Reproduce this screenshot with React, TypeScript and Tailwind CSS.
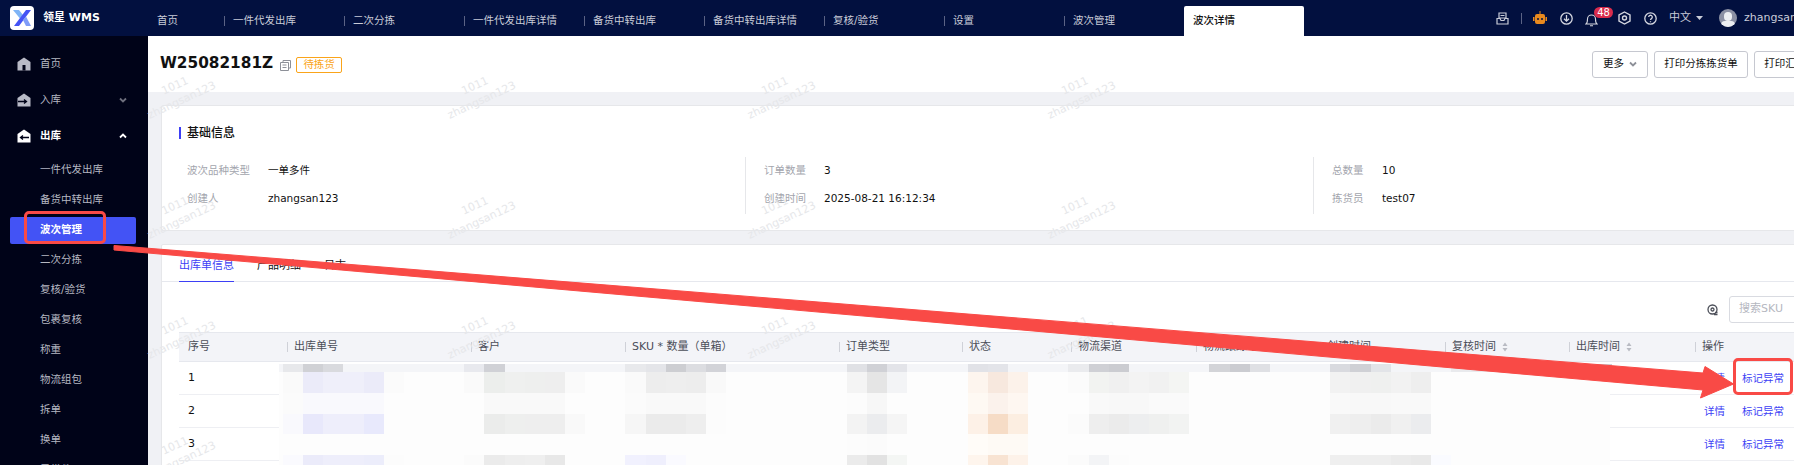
const FONT = "font-['DejaVu_Sans','Noto_Sans_CJK_SC',sans-serif]";

const TABS = ["一件代发出库", "二次分拣", "一件代发出库详情", "备货中转出库", "备货中转出库详情", "复核/验货", "设置", "波次管理"];
const SUB_MENU = ["一件代发出库", "备货中转出库", "波次管理", "二次分拣", "复核/验货", "包裹复核", "称重", "物流组包", "拆单", "换单", "异常件"];

const COLUMNS = [
  { title: "序号" },
  { title: "出库单号" },
  { title: "客户" },
  { title: "SKU * 数量（单箱）" },
  { title: "订单类型" },
  { title: "状态" },
  { title: "物流渠道" },
  { title: "物流跟踪号" },
  { title: "创建时间" },
  { title: "复核时间", sort: true },
  { title: "出库时间", sort: true },
  { title: "操作" },
];

const GRID = "grid grid-cols-[108px_184px_154px_214px_123px_109px_125px_124px_125px_124px_126px_130px]";

// mosaic that hides the customer data: [row, first column, ...colours]
const MOSAIC_ROWS = [
  { y: 364, h: 8 },
  { y: 372, h: 21 },
  { y: 393, h: 21 },
  { y: 414, h: 20 },
  { y: 434, h: 21 },
  { y: 455, h: 10 },
];
const MOSAIC: [number, number, ...string[]][] = [
  [0, 0, "#e7e8eb", "#d0d1d5", "#d9dade"],
  [0, 9, "#e8e9ee", "#d0d1d6"],
  [0, 17, "#e8e9ec", "#e4e5e9", "#cdced2", "#dcdde1", "#d2d3d8"],
  [0, 28, "#e0e1e5", "#d0d1d6", "#e3e4e9"],
  [0, 34, "#e1e2e7", "#e3e4e9"],
  [0, 39, "#eaebee", "#cfd0d5", "#cbccd1"],
  [0, 46, "#d3d4d8", "#cbccd1", "#dfe0e4"],
  [0, 52, "#d9dadf", "#cfd0d5", "#e2e4e8"],
  [0, 58, "#e9eaed", "#e9eaed"],
  [0, 65, "#cfd0d5"],
  [1, 0, "#fafafa", "#ebebf9", "#efeffa", "#efeffa", "#ebebf9", "#fbfbfb"],
  [1, 9, "#fafafa", "#eceeec", "#eff0ef", "#eeefee", "#eeeeee", "#fafafa"],
  [1, 17, "#fafafa", "#ededed", "#eeeeee", "#ededed", "#f9f9f9"],
  [1, 28, "#f4f4f4", "#e5e5e5", "#f3f4f6"],
  [1, 34, "#fdf5ee", "#f7e8de", "#fcf2ea"],
  [1, 39, "#fbfbfb", "#f2f3f1", "#f0f0f0", "#f3f3f3", "#f1f1f1", "#f4f5f3"],
  [1, 52, "#f2f2f2", "#f0f0f0", "#eff0ef", "#f2f2f2", "#eeeeee"],
  [2, 0, "#fbfbfb", "#f9f9fd", "#f9f9fd", "#f9f9fd", "#f9f9fd"],
  [2, 10, "#f9f9f9", "#f9f9f9", "#f9f9f9", "#f9f9f9"],
  [2, 17, "#fbfbfb", "#f9f9f9", "#f9f9f9", "#f9f9f9", "#fcfcfc"],
  [2, 28, "#fcfcfc", "#f7f7f7"],
  [2, 34, "#fef9f3", "#fbf2ec", "#fef7f1"],
  [2, 40, "#f9f9f9", "#f8f8f8", "#f8f8f8", "#fafafa", "#fafafa"],
  [2, 52, "#f9f9f9", "#f8f8f8", "#f8f8f8", "#f9f9f9", "#f9f9f9"],
  [3, 0, "#f9f9fd", "#e8e8fb", "#eeeefb", "#eeeefb", "#e8e9fc"],
  [3, 10, "#ebeceb", "#eeefee", "#eeeeee", "#eeeeee", "#f9f9f9"],
  [3, 17, "#f6f6f6", "#ebebeb", "#ebebeb", "#eeeeee", "#fcfcfc"],
  [3, 28, "#f3f3f3", "#ebecee", "#f5f5f5"],
  [3, 34, "#fdf1e7", "#f6dcc6", "#fceee1"],
  [3, 39, "#fbfbfb", "#eeeeee", "#ebebeb", "#edeeef", "#eff0ef", "#f2f3f2"],
  [3, 52, "#f0f0f0", "#eeeeee", "#ebebeb", "#f0f0f0", "#ebecee"],
  [4, 28, "#fcfcfc", "#fbfbfb", "#fdfdfd"],
  [4, 34, "#fffcf8", "#fefaf5", "#fefaf5"],
  [5, 0, "#fafafe", "#ebebfa", "#eeeefb", "#eeeefb", "#ecedfb", "#fcfcfc"],
  [5, 9, "#fbfbfb", "#ebebeb", "#eeeeee", "#efefef", "#e8e8e8"],
  [5, 17, "#f1f1fe", "#efeffd", "#fafaff"],
  [5, 28, "#ebebeb", "#e2e2e2", "#f4f6f4"],
  [5, 34, "#fef5ed", "#f8e3d2", "#fdf2e9"],
  [5, 39, "#fbfbfb", "#f3f4f6", "#fcfcfc"],
  [5, 52, "#efefef", "#eeeeee", "#eeeeee", "#ebebeb", "#e9e9e9", "#fafbff"],
];

function Logo() {
  return (
    <svg width="24" height="24" viewBox="0 0 24 24" className="shrink-0">
      <rect width="24" height="24" rx="4" fill="#fff" />
      <path d="M3 4h6l4 5-3 3.500z" fill="#7fb4f6" />
      <path d="M21 4h-5L4 20h5z" fill="#4353f5" />
      <path d="M13 14l3-3.500 5 9.500h-5z" fill="#7f9cf8" />
    </svg>
  );
}

function HouseIcon({ kind, color }: { kind: "home" | "in" | "out"; color: string }) {
  return (
    <svg width="14" height="14" viewBox="0 0 14 14" className="shrink-0">
      <path d="M7 .5 13.500 5v8.500H.5V5z" fill={color} />
      {kind === "home" && <rect x="5.500" y="8" width="3" height="5.500" fill="#000318" />}
      {kind === "in" && <path d="M1 8.500h8M7 6.500l2.500 2-2.500 2" stroke="#000318" strokeWidth="1.300" fill="none" />}
      {kind === "out" && <path d="M12 8.500H4M6 6.500l-2.500 2 2.500 2" stroke="#000318" strokeWidth="1.300" fill="none" />}
    </svg>
  );
}

function Chevron({ up, color }: { up?: boolean; color: string }) {
  return (
    <svg width="8" height="6" viewBox="0 0 8 6" className="shrink-0">
      <path d={up ? "M1 4.500 4 1.500l3 3" : "M1 1.500 4 4.500l3-3"} stroke={color} strokeWidth="1.800" fill="none" />
    </svg>
  );
}

function TopIcons() {
  return (
    <div className={`absolute left-[1496px] top-0 h-[36px] w-[298px] flex items-center text-[11px] text-[#c9ccd8] ${FONT}`}>
      <svg width="13" height="13" viewBox="0 0 13 13" fill="none" stroke="#c9ccd8" strokeWidth="1.200" className="shrink-0">
        <path d="M3 1h7v5H3zM1 6.500l3 0 1 2h3l1-2h3v5.500H1zM4.500 3.500h4" />
      </svg>
      <div className="w-px h-[11px] bg-[#5b6385] ml-[12px] shrink-0" />
      <svg width="14" height="15" viewBox="0 0 14 15" className="ml-[11px] shrink-0">
        <rect x="6.500" y="0" width="1" height="3" fill="#e98a1e" />
        <rect x="2" y="3" width="10" height="10" rx="2" fill="#e98a1e" />
        <rect x="0" y="6" width="1.500" height="4" fill="#e98a1e" />
        <rect x="12.500" y="6" width="1.500" height="4" fill="#e98a1e" />
        <circle cx="5" cy="8" r="1" fill="#02103f" />
        <circle cx="9" cy="8" r="1" fill="#02103f" />
      </svg>
      <svg width="13" height="13" viewBox="0 0 13 13" fill="none" stroke="#d5d7e0" strokeWidth="1.300" className="ml-[13px] shrink-0">
        <circle cx="6.500" cy="6.500" r="5.700" />
        <path d="M6.500 3v6M4 6.800l2.500 2.400L9 6.800" />
      </svg>
      <div className="relative ml-[12px] w-[13px] h-[14px] mt-[4px] shrink-0">
        <svg width="13" height="14" viewBox="0 0 13 14" fill="none" stroke="#d5d7e0" strokeWidth="1.100">
          <path d="M1 11c1.500-1 1.500-3 1.500-5a4 4 0 0 1 8 0c0 2 0 4 1.500 5zM5 12.800h3" />
        </svg>
        <span className="absolute left-[9px] top-[-6px] h-[11px] w-[19px] rounded-full bg-[#d92c4c] text-white text-[10px] leading-[11px] text-center">48</span>
      </div>
      <svg width="13" height="14" viewBox="0 0 13 14" fill="none" stroke="#d5d7e0" strokeWidth="1.400" className="ml-[20px] shrink-0">
        <path d="M6.500 1 12 4v6l-5.500 3L1 10V4z" />
        <circle cx="6.500" cy="7" r="2" />
      </svg>
      <svg width="13" height="13" viewBox="0 0 13 13" fill="none" stroke="#d5d7e0" strokeWidth="1.300" className="ml-[13px] shrink-0">
        <circle cx="6.500" cy="6.500" r="5.700" />
        <path d="M4.700 5a1.800 1.800 0 1 1 2.700 1.600c-.6.4-.9.700-.9 1.400M6.500 9.200v1" />
      </svg>
      <span className="ml-[12px] w-[22px] shrink-0">中文</span>
      <svg width="7" height="4" viewBox="0 0 7 4" className="ml-[5px] shrink-0">
        <path d="M0 0h7L3.500 4z" fill="#c9ccd8" />
      </svg>
      <div className="relative ml-[16px] size-[18px] rounded-full bg-[#8b90a4] overflow-hidden shrink-0">
        <div className="absolute left-[5px] top-[3px] w-[8px] h-[9px] rounded-full bg-[#eceef2]" />
        <div className="absolute left-[2px] top-[12px] w-[14px] h-[8px] rounded-full bg-[#eceef2]" />
      </div>
      <span className="ml-[7px] whitespace-nowrap">zhangsan123</span>
    </div>
  );
}

function TopBar() {
  return (
    <header className={`relative h-[36px] bg-[#02103f] flex items-center ${FONT}`}>
      <div className="w-[104px] pl-[10px] flex items-center gap-[9px] shrink-0">
        <Logo />
        <span className="text-[11px] font-bold text-white whitespace-nowrap">领星 WMS</span>
      </div>
      <div className="self-end h-[30px] flex text-[10.5px] text-[#c9ccd8]">
        <div className="w-[120px] pl-[53px] flex items-center">首页</div>
        {TABS.map((t) => (
          <div key={t} className="w-[120px] flex items-center">
            <div className="w-px h-[10px] bg-[#5b6385]" />
            <span className="pl-[8px] whitespace-nowrap">{t}</span>
          </div>
        ))}
        <div className="w-[120px] pl-[9px] flex items-center bg-white rounded-t-[2px] text-[#111] font-medium">波次详情</div>
      </div>
      <TopIcons />
    </header>
  );
}

function Sidebar() {
  return (
    <aside className={`w-[148px] shrink-0 bg-[#000318] text-[10.5px] text-[#b6b8c2] ${FONT}`}>
      <div className="h-[36px] mt-[10px] pl-[17px] pr-[21px] flex items-center gap-[9px]">
        <HouseIcon kind="home" color="#b8bac6" />
        <span>首页</span>
      </div>
      <div className="h-[36px] pl-[17px] pr-[21px] flex items-center gap-[9px]">
        <HouseIcon kind="in" color="#b8bac6" />
        <span className="flex-1">入库</span>
        <Chevron color="#6d6f7d" />
      </div>
      <div className="h-[36px] pl-[17px] pr-[21px] flex items-center gap-[9px] text-white font-bold">
        <HouseIcon kind="out" color="#ffffff" />
        <span className="flex-1">出库</span>
        <Chevron up color="#ffffff" />
      </div>
      <div className="mt-[1px] flex flex-col">
        {SUB_MENU.map((m) =>
          m === "波次管理" ? (
            <div key={m} className="h-[30px] flex items-center">
              <div className="ml-[10px] w-[126px] h-[27px] pl-[30px] flex items-center bg-[#4353f5] rounded-[2px] text-white font-bold">{m}</div>
            </div>
          ) : (
            <div key={m} className="h-[30px] pl-[40px] flex items-center">{m}</div>
          )
        )}
      </div>
    </aside>
  );
}

function Info({ label, value }: { label: string; value: string }) {
  return (
    <div className="flex items-center h-[28px]">
      <span className="text-[#a3a5ad] whitespace-nowrap">{label}</span>
      <span className="text-[#111] whitespace-nowrap">{value}</span>
    </div>
  );
}

function InfoColumn({ rows, className }: { rows: [string, string][]; className: string }) {
  return (
    <div className={`shrink-0 h-[57px] flex flex-col ${className}`}>
      {rows.map(([l, v]) => (
        <Info key={l} label={l} value={v} />
      ))}
    </div>
  );
}

function SortIcon() {
  return (
    <svg width="6" height="10" viewBox="0 0 6 10" className="ml-[6px] shrink-0">
      <path d="M3 0.500 5.500 4H.5zM3 9.500.5 6h5z" fill="#b9bbc3" />
    </svg>
  );
}

function OrderTable() {
  return (
    <div className="mt-[9px] ml-[17px] w-[1650px] text-[11px]">
      <div className={`${GRID} h-[30px] bg-[#f3f4f8] border-y border-[#e6e8ee] text-[#4b4e58]`}>
        {COLUMNS.map((c, i) => (
          <div key={c.title} className="flex items-center whitespace-nowrap overflow-hidden">
            {i > 0 && <div className="w-px h-[10px] bg-[#cfd1d8] mr-[6px] shrink-0" />}
            <span className={i === 0 ? "pl-[9px]" : ""}>{c.title}</span>
            {c.sort && <SortIcon />}
          </div>
        ))}
      </div>
      {["1", "2", "3", "4"].map((n) => (
        <div key={n} className={`${GRID} h-[33px] pt-[1px] border-b border-[#eeeff3] items-center text-[#111]`}>
          <span className="pl-[9px]">{n}</span>
          {COLUMNS.slice(1, -1).map((c) => (
            <span key={c.title} />
          ))}
          <div className="pl-[9px] flex gap-[17px] text-[#3d3ff5] text-[10.5px] whitespace-nowrap">
            <span>详情</span>
            <span>标记异常</span>
          </div>
        </div>
      ))}
    </div>
  );
}

function Watermarks() {
  const tiles = Array.from({ length: 16 }, (_, i) => i);
  return (
    <div className={`absolute left-[156px] top-[59px] grid grid-cols-[repeat(4,300px)] auto-rows-[120px] pointer-events-none text-[11px] leading-[16px] text-[#e6e7ea] ${FONT}`}>
      {tiles.map((i) => (
        <div key={i} className="flex flex-col items-center w-[76px] -rotate-[25deg] mt-[15px]">
          <span>1011</span>
          <span>zhangsan123</span>
        </div>
      ))}
    </div>
  );
}

function Mosaic() {
  return (
    <svg width="1794" height="465" className="absolute left-0 top-0 pointer-events-none" shapeRendering="crispEdges">
      <rect x="279" y="364" width="1331" height="8" fill="#f4f5f8" />
      <rect x="279" y="372" width="1331" height="93" fill="#fdfdfd" />
      {MOSAIC.map(([row, first, ...colours]) =>
        colours.map((c, i) => (
          <rect
            key={`${row}-${first}-${i}`}
            x={283 + (first + i) * 20.14}
            y={MOSAIC_ROWS[row].y}
            width="20.14"
            height={MOSAIC_ROWS[row].h}
            fill={c}
          />
        ))
      )}
    </svg>
  );
}

function Annotations() {
  return (
    <>
      <svg width="1794" height="465" className="absolute left-0 top-0 pointer-events-none">
        <path
          d="M114 245.500 1703 373l2-6.500 28.500 17.500-33 14 2.500-8L114 250z"
          fill="#f94a46"
          stroke="#f94a46"
          strokeWidth="1"
          strokeLinejoin="round"
        />
      </svg>
      <div className="absolute left-[24px] top-[211px] w-[82px] h-[33px] border-[3px] border-[#f94a46] rounded-[5px]" />
      <div className="absolute left-[1733px] top-[358px] w-[60px] h-[37px] border-[3px] border-[#f94a46] rounded-[5px]" />
    </>
  );
}

export default function App() {
  return (
    <div className={`relative w-[1794px] h-[465px] overflow-hidden bg-[#f0f1f5] ${FONT}`}>
      <TopBar />
      <div className="flex h-[429px] overflow-hidden">
        <Sidebar />
        <main className="w-[1712px] shrink-0 text-[10.5px]">
          <div className="h-[56px] bg-white pl-[12px] pr-[12px] flex items-center">
            <h1 className="text-[15.3px] font-bold text-[#111] leading-none">W25082181Z</h1>
            <svg width="11" height="11" viewBox="0 0 11 11" fill="none" stroke="#8d9098" strokeWidth="1" className="ml-[7px] mt-[3px]">
              <path d="M3 2.500V.5h7.500V8H8.500M.5 2.500h8V10.500h-8zM2.500 5h4M2.500 7.500h4" />
            </svg>
            <span className="ml-[5px] h-[16px] w-[46px] mt-[1px] flex items-center justify-center border border-[#faa41a] rounded-[2px] text-[#faa41a]">待拣货</span>
            <div className="ml-auto flex gap-[6px] text-[#111]">
              <button className="h-[27px] w-[56px] flex items-center justify-center gap-[5px] border border-[#c6c8d0] rounded-[3px] bg-white">
                更多
                <Chevron color="#8d9098" />
              </button>
              <button className="h-[27px] w-[94px] border border-[#c6c8d0] rounded-[3px] bg-white">打印分拣拣货单</button>
              <button className="h-[27px] w-[94px] border border-[#c6c8d0] rounded-[3px] bg-white">打印汇总拣货单</button>
            </div>
          </div>
          <section className="mt-[13px] ml-[13px] h-[126px] bg-white border border-[#e6e7ea] rounded-[2px] pl-[17px]">
            <div className="mt-[21px] h-[12px] flex items-center border-l-2 border-[#3d3ff5] pl-[6px] text-[12px] font-medium text-[#111]">基础信息</div>
            <div className="mt-[18px] flex">
              <InfoColumn className="w-[566px] pl-[8px] [&>div>span:first-child]:w-[81px]" rows={[["波次品种类型", "一单多件"], ["创建人", "zhangsan123"]]} />
              <InfoColumn className="w-[568px] pl-[18px] border-l border-[#e6e7ea] [&>div>span:first-child]:w-[60px]" rows={[["订单数量", "3"], ["创建时间", "2025-08-21 16:12:34"]]} />
              <InfoColumn className="w-[568px] pl-[18px] border-l border-[#e6e7ea] [&>div>span:first-child]:w-[50px]" rows={[["总数量", "10"], ["拣货员", "test07"]]} />
            </div>
          </section>
          <section className="mt-[13px] ml-[13px] h-[240px] bg-white border border-[#e6e7ea] rounded-[2px]">
            <div className="h-[37px] pl-[17px] flex gap-[23px] border-b border-[#e6e8ee] text-[11px] text-[#111]">
              <div className="h-[37px] pt-[7px] flex items-center border-b border-[#3d3ff5] text-[#3d3ff5]">出库单信息</div>
              <div className="pt-[7px] flex items-center">产品明细</div>
              <div className="pt-[7px] flex items-center">日志</div>
            </div>
            <div className="mt-[14px] h-[27px] flex items-center pl-[1545px]">
              <svg width="11" height="12" viewBox="0 0 11 12" fill="none" stroke="#4b4e58" strokeWidth="1.300" className="shrink-0">
                <circle cx="5.500" cy="5.500" r="4.500" />
                <circle cx="5.500" cy="5.500" r="1.500" />
                <path d="M7 10.500h3.500M8 8.500h2.500" />
              </svg>
              <div className="ml-[11px] h-[27px] w-[120px] pl-[9px] flex items-center border border-[#d9dbe1] rounded-[3px] text-[#b5b7bf] text-[11px] shrink-0">搜索SKU</div>
            </div>
            <OrderTable />
          </section>
        </main>
      </div>
      <Watermarks />
      <Mosaic />
      <Annotations />
    </div>
  );
}
